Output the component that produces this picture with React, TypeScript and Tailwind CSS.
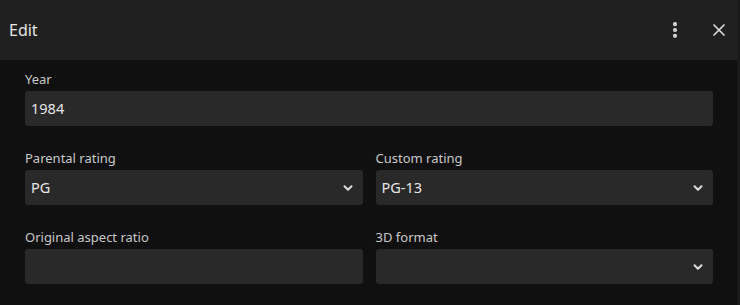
import { X, EllipsisVertical, ChevronDown } from "lucide-react"

function Field({ label, value, select }: { label: string; value?: string; select?: boolean }) {
  return (
    <div className="flex flex-col">
      <label className="text-[13px] leading-[18px] text-[#c8c8c8] mb-[3px]">{label}</label>
      <div className="h-[35px] rounded-[3px] bg-[#292929] flex items-center pl-[6px] pr-[8px] text-[14.5px] text-[#e6e6e6]">
        <span className="flex-1">{value}</span>
        {select && <ChevronDown className="h-[14px] w-[14px] text-[#dcdcdc]" strokeWidth={3.5} />}
      </div>
    </div>
  )
}

export default function App() {
  return (
    <div
      className="w-[740px] h-[305px] bg-[#101010] flex overflow-hidden"
      style={{ fontFamily: '"Noto Sans", sans-serif' }}
    >
      <div className="flex-1 flex flex-col">
        {/* Header */}
        <div className="h-[60px] bg-[#202020] flex items-center pl-[9px] pr-[8px] shrink-0">
          <h3 className="text-[16px] text-[#e6e6e6]">Edit</h3>
          <div className="ml-auto flex items-center gap-[24px]">
            <EllipsisVertical className="h-[20px] w-[20px] text-[#dcdcdc]" strokeWidth={3} />
            <X className="h-[20px] w-[20px] text-[#dcdcdc]" strokeWidth={2} />
          </div>
        </div>

        {/* Form */}
        <div className="flex-1 pl-[25px] pr-[24px] pt-[10px] flex flex-col gap-[23px]">
          <Field label="Year" value="1984" />
          <div className="grid grid-cols-2 gap-[13px]">
            <Field label="Parental rating" value="PG" select />
            <Field label="Custom rating" value="PG-13" select />
          </div>
          <div className="grid grid-cols-2 gap-[13px]">
            <Field label="Original aspect ratio" />
            <Field label="3D format" select />
          </div>
        </div>
      </div>
      {/* scrollbar track */}
      <div className="w-[3px] bg-[#1a1a1a]" />
    </div>
  )
}
